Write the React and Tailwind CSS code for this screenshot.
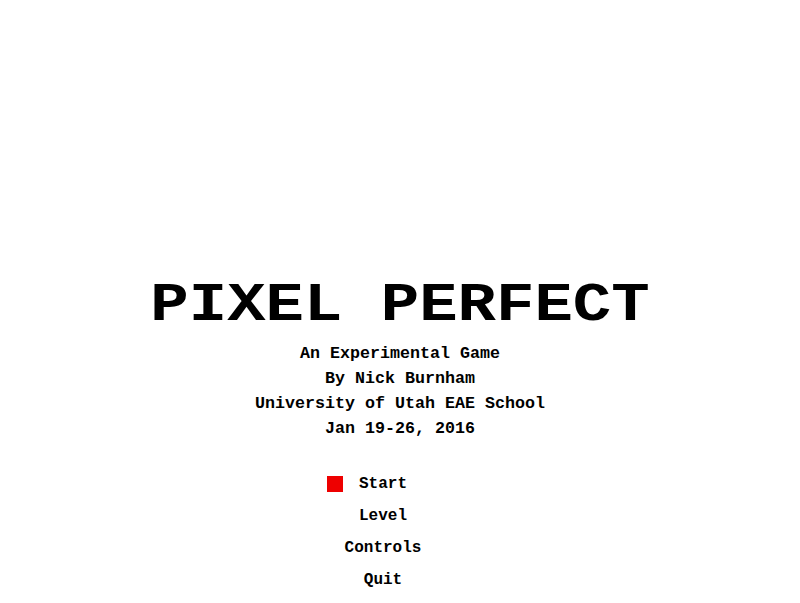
const MENU = ['Start', 'Level', 'Controls', 'Quit']

export default function App() {
  const selected = 0
  return (
    <div
      className="w-[800px] h-[603px] bg-white text-black font-bold flex flex-col items-center pt-[271px]"
      style={{ fontFamily: '"Liberation Mono", "Courier New", monospace' }}
    >
      {/* Title */}
      <h1 className="text-[64px] leading-none scale-y-[0.84] origin-[50%_49px]">PIXEL PERFECT</h1>

      {/* Credits */}
      <div className="mt-[6px] flex flex-col items-center text-[16.67px] leading-[25px]">
        <p>An Experimental Game</p>
        <p>By Nick Burnham</p>
        <p>University of Utah EAE School</p>
        <p>Jan 19-26, 2016</p>
      </div>

      {/* Menu */}
      <div className="mt-[27px] flex w-full justify-center">
        <ul className="mr-[34px] flex w-[120px] flex-col items-center text-[16px] leading-[32px]">
          {MENU.map((item, i) => (
            <li key={item} className="relative">
              {i === selected && (
                <span className="absolute left-[-32px] top-[8px] h-[16px] w-[16px] bg-[#ee0000]" />
              )}
              {item}
            </li>
          ))}
        </ul>
      </div>
    </div>
  )
}
